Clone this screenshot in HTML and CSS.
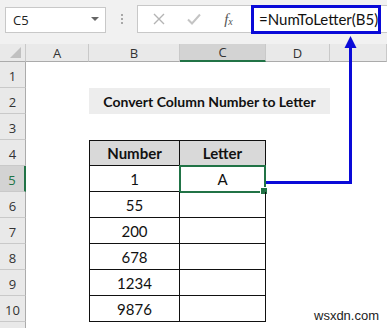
FILE: index.html
```html
<!DOCTYPE html>
<html lang="en">
<head>
  <meta charset="UTF-8">
  <title>NumToLetter</title>
  <link rel="stylesheet" href="styles.css">
</head>
<body>
  <div class="window">
    <!-- formula bar -->
    <div class="toolbar">
      <div class="name-box">
        <span>C5</span>
        <span class="drop"></span>
      </div>
      <div class="dots"><i></i><i></i><i></i></div>
      <div class="formula-box">
        <span class="fbtn cancel">
          <svg width="12" height="12" viewBox="0 0 12 12"><path d="M1 1L11 11M11 1L1 11" stroke="#b4b4b4" stroke-width="1.4" fill="none"/></svg>
        </span>
        <span class="fbtn enter">
          <svg width="14" height="12" viewBox="0 0 14 12"><path d="M1 6.5L5 10.5L13 1.5" stroke="#c4c4c4" stroke-width="2" fill="none"/></svg>
        </span>
        <span class="fbtn fx">f<sub>x</sub></span>
        <span class="formula">=NumToLetter(B5)</span>
      </div>
    </div>

    <!-- sheet -->
    <div class="sheet">
      <div class="corner"><span class="tri"></span></div>
      <div class="colh">A</div>
      <div class="colh">B</div>
      <div class="colh active">C</div>
      <div class="colh">D</div>
      <div class="colh"></div>

      <div class="rowh">1</div><div></div><div></div><div></div><div></div><div></div>

      <div class="rowh">2</div><div></div>
      <div class="title">Convert Column Number to Letter</div>
      <div></div>

      <div class="rowh">3</div><div></div><div></div><div></div><div></div><div></div>

      <div class="rowh">4</div><div></div>
      <div class="tc head first top">Number</div>
      <div class="tc head top">Letter</div>
      <div></div><div></div>

      <div class="rowh active">5</div><div></div>
      <div class="tc first">1</div>
      <div class="tc selected">A<span class="handle"></span></div>
      <div></div><div></div>

      <div class="rowh">6</div><div></div>
      <div class="tc first">55</div><div class="tc"></div>
      <div></div><div></div>

      <div class="rowh">7</div><div></div>
      <div class="tc first">200</div><div class="tc"></div>
      <div></div><div></div>

      <div class="rowh">8</div><div></div>
      <div class="tc first">678</div><div class="tc"></div>
      <div></div><div></div>

      <div class="rowh">9</div><div></div>
      <div class="tc first">1234</div><div class="tc"></div>
      <div></div><div></div>

      <div class="rowh">10</div><div></div>
      <div class="tc first">9876</div><div class="tc"></div>
      <div></div><div></div>

      <div class="rowh"></div><div></div><div></div><div></div><div></div><div></div>
    </div>

    <div class="watermark">wsxdn.com</div>

    <!-- blue annotation drawn over the sheet -->
    <svg class="callout" width="387" height="328" viewBox="0 0 387 328">
      <rect x="252.5" y="6.5" width="127" height="26" fill="none" stroke="#0a0ad8" stroke-width="3"/>
      <polygon points="350.5,36 344.5,48 356.5,48" fill="#0a0ad8"/>
      <line x1="350.5" y1="45" x2="350.5" y2="184" stroke="#0a0ad8" stroke-width="3"/>
      <line x1="266" y1="182.5" x2="352" y2="182.5" stroke="#0a0ad8" stroke-width="3"/>
    </svg>
  </div>
</body>
</html>
```

FILE: styles.css
```css
body {
  margin: 0;
  padding: 0;
  background-color: white;
  font-family: "Open Sans", "Noto Sans", sans-serif;
  overflow: hidden;
}

.window {
  position: relative;
  width: 387px;
  height: 328px;
  overflow: hidden;
}

/* formula bar */
.toolbar {
  height: 44px;
  background-color: #f1f1f1;
  display: flex;
  align-items: flex-start;
  box-sizing: border-box;
}

.name-box {
  margin: 7px 0 0 5px;
  width: 101px;
  height: 26px;
  box-sizing: border-box;
  background-color: white;
  border: 1px solid #c8c8c8;
  display: flex;
  align-items: center;
  justify-content: space-between;
  padding: 0 6px 0 7px;
  font-size: 13px;
  color: #222;
}

.drop {
  width: 0;
  height: 0;
  border-left: 4px solid transparent;
  border-right: 4px solid transparent;
  border-top: 4px solid #666;
  margin-top: -3px;
}

.dots {
  width: 31px;
  display: flex;
  flex-direction: column;
  align-items: center;
  gap: 2px;
  margin-top: 14px;
}

.dots i {
  width: 2px;
  height: 2px;
  background-color: #a8a8a8;
}

.formula-box {
  margin-top: 5px;
  flex-grow: 1;
  height: 28px;
  box-sizing: border-box;
  background-color: white;
  border: 1px solid #c8c8c8;
  border-right: none;
  display: flex;
  align-items: center;
}

.fbtn {
  width: 35px;
  display: flex;
  justify-content: center;
  align-items: center;
}

.cancel {
  margin-left: 3px;
}

.fx {
  font-family: "Liberation Serif", serif;
  font-style: italic;
  color: #555;
  font-size: 15px;
  display: block;
  text-align: center;
}

.fx sub {
  font-size: 10px;
  vertical-align: -1px;
}

.formula {
  margin-left: 13px;
  font-family: Lato, sans-serif;
  font-size: 15px;
  color: #111;
}

/* sheet grid */
.sheet {
  display: grid;
  grid-template-columns: 26px 63px 91px 86px 64px 57px;
  grid-template-rows: 18px repeat(11, 26px);
}

.corner {
  background-color: #e9e9e9;
  border-right: 1px solid #c9c9c9;
  border-bottom: 1px solid #ababab;
  position: relative;
}

.tri {
  position: absolute;
  right: 4px;
  bottom: 3px;
  width: 0;
  height: 0;
  border-left: 11px solid transparent;
  border-bottom: 11px solid #c0c0c0;
}

.colh {
  background-color: #e9e9e9;
  border-right: 1px solid #c9c9c9;
  border-bottom: 1px solid #ababab;
  font-size: 13px;
  color: #333;
  display: flex;
  align-items: center;
  justify-content: center;
}

.colh.active {
  background-color: #d3d3d3;
  border-bottom: 2px solid #217346;
  color: #333;
}

.rowh {
  background-color: #e9e9e9;
  border-right: 1px solid #ababab;
  border-bottom: 1px solid #c9c9c9;
  font-size: 13px;
  color: #333;
  display: flex;
  align-items: flex-end;
  justify-content: center;
  padding-bottom: 2px;
  box-sizing: border-box;
}

.rowh.active {
  background-color: #d3d3d3;
  border-right: 2px solid #217346;
  color: #217346;
}

.title {
  grid-column: 3 / 6;
  background-color: #ededed;
  font-family: Lato, sans-serif;
  font-weight: bold;
  font-size: 14px;
  color: #111;
  display: flex;
  align-items: center;
  justify-content: center;
}

/* table */
.tc {
  border-right: 1px solid #111;
  border-bottom: 1px solid #111;
  font-family: Lato, sans-serif;
  font-size: 15px;
  color: #111;
  display: flex;
  align-items: center;
  justify-content: center;
  box-sizing: border-box;
  position: relative;
}

.tc.first {
  border-left: 1px solid #111;
}

.tc.top {
  border-top: 1px solid #111;
}

.tc.head {
  background-color: #d9d9d9;
  font-weight: bold;
}

.tc.selected {
  border: 2px solid #217346;
  margin: -1px 0 -1px -1px;
}

.handle {
  position: absolute;
  right: -4px;
  bottom: -4px;
  width: 6px;
  height: 6px;
  background-color: #217346;
  border: 1px solid white;
}

.watermark {
  position: absolute;
  left: 314px;
  top: 308px;
  font-family: "Liberation Sans", sans-serif;
  font-size: 13px;
  color: #222;
}

.callout {
  position: absolute;
  left: 0;
  top: 0;
  pointer-events: none;
}
```
